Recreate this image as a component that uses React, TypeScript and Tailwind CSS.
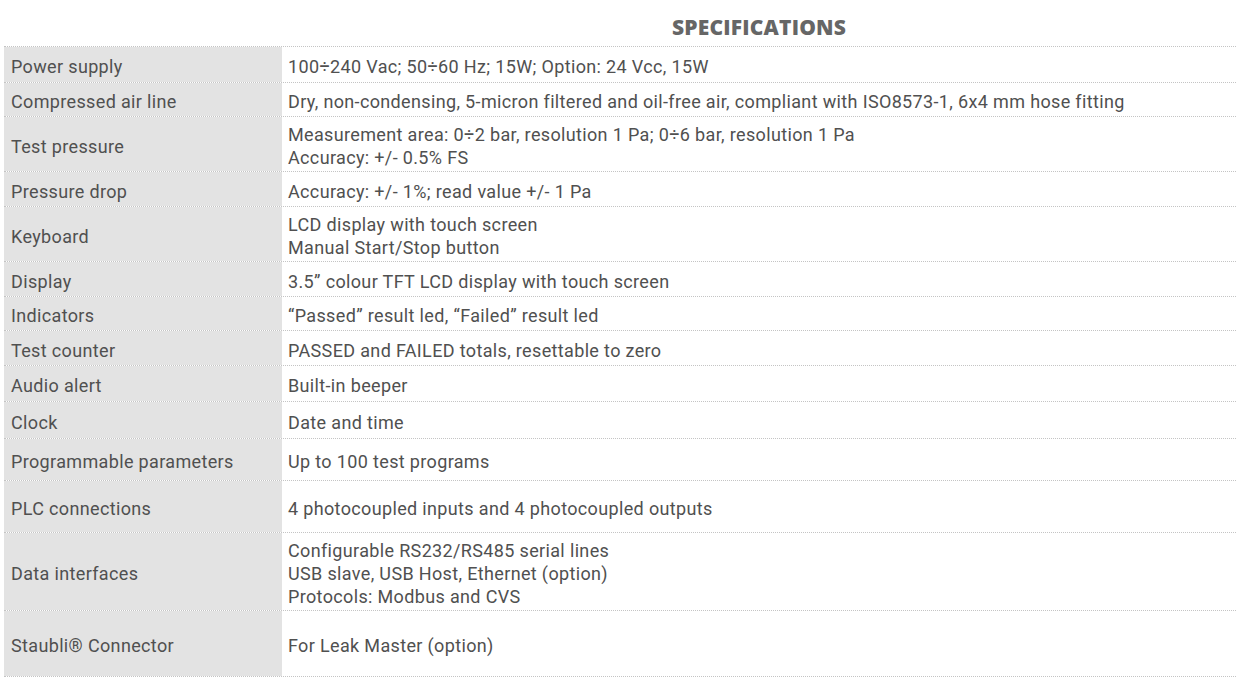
import React from "react";

const rows: { label: string; value: string[]; h: string }[] = [
  { label: "Power supply", value: ["100÷240 Vac; 50÷60 Hz; 15W; Option: 24 Vcc, 15W"], h: "h-[36px]" },
  { label: "Compressed air line", value: ["Dry, non-condensing, 5-micron filtered and oil-free air, compliant with ISO8573-1, 6x4 mm hose fitting"], h: "h-[34px]" },
  { label: "Test pressure", value: ["Measurement area: 0÷2 bar, resolution 1 Pa; 0÷6 bar, resolution 1 Pa", "Accuracy: +/- 0.5% FS"], h: "h-[55px]" },
  { label: "Pressure drop", value: ["Accuracy: +/- 1%; read value +/- 1 Pa"], h: "h-[35px]" },
  { label: "Keyboard", value: ["LCD display with touch screen", "Manual Start/Stop button"], h: "h-[55px]" },
  { label: "Display", value: ["3.5” colour TFT LCD display with touch screen"], h: "h-[35px]" },
  { label: "Indicators", value: ["“Passed” result led, “Failed” result led"], h: "h-[34px]" },
  { label: "Test counter", value: ["PASSED and FAILED totals, resettable to zero"], h: "h-[35px]" },
  { label: "Audio alert", value: ["Built-in beeper"], h: "h-[36px]" },
  { label: "Clock", value: ["Date and time"], h: "h-[37px]" },
  { label: "Programmable parameters", value: ["Up to 100 test programs"], h: "h-[42px]" },
  { label: "PLC connections", value: ["4 photocoupled inputs and 4 photocoupled outputs"], h: "h-[52px]" },
  { label: "Data interfaces", value: ["Configurable RS232/RS485 serial lines", "USB slave, USB Host, Ethernet (option)", "Protocols: Modbus and CVS"], h: "h-[78px]" },
  { label: "Staubli® Connector", value: ["For Leak Master (option)"], h: "h-[66px]" },
];

export default function App() {
  return (
    <div className="w-[1248px] h-[683px] bg-white px-[4px] pt-[14px]" style={{ fontFamily: "Roboto, 'Liberation Sans', sans-serif" }}>
      <div className="w-[1232px]">
        <div className="grid grid-cols-[278px_1fr] h-[32px]">
          <div />
          <div
            className="text-center text-[21px] font-extrabold leading-[26px] text-[#666666] tracking-[0.2px]"
            style={{ fontFamily: "'Open Sans', 'Liberation Sans', sans-serif" }}
          >
            SPECIFICATIONS
          </div>
        </div>
        <div className="border-t border-dotted border-[#c4c4c4]">
          {rows.map((r) => (
            <div key={r.label} className={`grid grid-cols-[278px_1fr] border-b border-dotted border-[#c4c4c4] ${r.h}`}>
              <div className="bg-[#e3e3e3] flex items-center pl-[7px] pt-[4px] text-[18px] tracking-[0.35px] text-[#505050]">{r.label}</div>
              <div className="flex flex-col justify-center pl-[6px] pt-[4px] text-[18px] tracking-[0.35px] leading-[23px] text-[#505050]">
                {r.value.map((v) => (
                  <div key={v}>{v}</div>
                ))}
              </div>
            </div>
          ))}
        </div>
      </div>
    </div>
  );
}
